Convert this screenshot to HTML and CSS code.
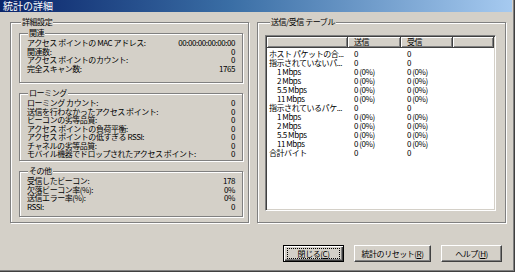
FILE: index.html
```html
<!DOCTYPE html>
<html lang="ja">
  <head>
    <meta charset="UTF-8" />
    <title>統計の詳細</title>
    <link rel="stylesheet" href="styles.css">
  </head>
  <body>
    <div class="window">
      <div class="titlebar">統計の詳細</div>

      <div class="panels">
        <fieldset class="group outer">
          <legend>詳細設定</legend>

          <fieldset class="group sub assoc">
            <legend>関連</legend>
            <div class="row"><span>アクセス ポイントの MAC アドレス:</span><span>00:00:00:00:00:00</span></div>
            <div class="row"><span>関連数:</span><span>0</span></div>
            <div class="row"><span>アクセス ポイントのカウント:</span><span>0</span></div>
            <div class="row"><span>完全スキャン数:</span><span>1765</span></div>
          </fieldset>

          <fieldset class="group sub roaming">
            <legend>ローミング</legend>
            <div class="row"><span>ローミング カウント:</span><span>0</span></div>
            <div class="row"><span>送信を行わなかったアクセス ポイント:</span><span>0</span></div>
            <div class="row"><span>ビーコンの劣等品質:</span><span>0</span></div>
            <div class="row"><span>アクセス ポイントの負荷平衡:</span><span>0</span></div>
            <div class="row"><span>アクセス ポイントの低すぎる RSSI:</span><span>0</span></div>
            <div class="row"><span>チャネルの劣等品質:</span><span>0</span></div>
            <div class="row"><span>モバイル機器でドロップされたアクセス ポイント:</span><span>0</span></div>
          </fieldset>

          <fieldset class="group sub other">
            <legend>その他</legend>
            <div class="row"><span>受信したビーコン:</span><span>178</span></div>
            <div class="row"><span>欠落ビーコン率(%):</span><span>0%</span></div>
            <div class="row"><span>送信エラー率(%):</span><span>0%</span></div>
            <div class="row"><span>RSSI:</span><span>0</span></div>
          </fieldset>
        </fieldset>

        <fieldset class="group table-group">
          <legend>送信/受信 テーブル</legend>
          <div class="listview">
            <div class="lv-head">
              <span></span>
              <span>送信</span>
              <span>受信</span>
              <span></span>
            </div>
            <div class="lv-row"><span>ホスト パケットの合...</span><span>0</span><span>0</span></div>
            <div class="lv-row"><span>指示されていないパ...</span><span>0</span><span>0</span></div>
            <div class="lv-row"><span class="indent">1 Mbps</span><span>0 (0%)</span><span>0 (0%)</span></div>
            <div class="lv-row"><span class="indent">2 Mbps</span><span>0 (0%)</span><span>0 (0%)</span></div>
            <div class="lv-row"><span class="indent">5.5 Mbps</span><span>0 (0%)</span><span>0 (0%)</span></div>
            <div class="lv-row"><span class="indent">11 Mbps</span><span>0 (0%)</span><span>0 (0%)</span></div>
            <div class="lv-row"><span>指示されているパケ...</span><span>0</span><span>0</span></div>
            <div class="lv-row"><span class="indent">1 Mbps</span><span>0 (0%)</span><span>0 (0%)</span></div>
            <div class="lv-row"><span class="indent">2 Mbps</span><span>0 (0%)</span><span>0 (0%)</span></div>
            <div class="lv-row"><span class="indent">5.5 Mbps</span><span>0 (0%)</span><span>0 (0%)</span></div>
            <div class="lv-row"><span class="indent">11 Mbps</span><span>0 (0%)</span><span>0 (0%)</span></div>
            <div class="lv-row"><span>合計バイト</span><span>0</span><span>0</span></div>
          </div>
        </fieldset>
      </div>

      <div class="buttons">
        <button class="btn btn-default" type="button"><span class="focus">閉じる(<u>C</u>)</span></button>
        <button class="btn btn-reset" type="button">統計のリセット(<u>R</u>)</button>
        <button class="btn" type="button">ヘルプ(<u>H</u>)</button>
      </div>
    </div>
  </body>
</html>
```

FILE: styles.css
```css
* {
  margin: 0;
  padding: 0;
  box-sizing: border-box;
}

body {
  background-color: #d4d0c8;
  font-family: "Noto Sans CJK JP", "Liberation Sans", sans-serif;
  font-size: 8px;
  letter-spacing: -0.45px;
  color: #000;
}

.window {
  width: 515px;
  height: 272px;
  background-color: #d4d0c8;
  border-right: 1px solid #404040;
  border-bottom: 1px solid #404040;
  box-shadow: inset -1px -1px 0 #808080;
}

.titlebar {
  height: 12px;
  margin-right: 2px;
  padding-left: 3px;
  background: linear-gradient(90deg, #0a246a 0%, #3a6ea5 45%, #a6caf0 100%);
  color: #fff;
  font-size: 10px;
  line-height: 12px;
  letter-spacing: 0;
}

.panels {
  display: flex;
  gap: 8px;
  padding: 5px 0 0 10px;
}

/* etched group box */
.group {
  border: 1px solid #808080;
  box-shadow: inset 1px 1px 0 #fff, 1px 1px 0 #fff;
  min-inline-size: 0;
}

.group > legend {
  background-color: #d4d0c8;
  line-height: 10px;
  padding: 0 1px;
  margin-left: 2px;
}

.outer {
  width: 239px;
  height: 206px;
  padding: 1px 5px 0 8px;
}

.sub {
  padding: 1px 7px 0 7px;
  margin-bottom: 5px;
}

.sub > legend {
  margin-left: 1px;
}

.assoc {
  height: 55px;
}

.roaming {
  height: 73px;
}

.other {
  height: 51px;
}

.row {
  display: flex;
  justify-content: space-between;
  line-height: 8.5px;
  white-space: nowrap;
}

.table-group {
  width: 249px;
  height: 206px;
  padding: 8px 9px 0 7px;
}

.table-group > legend {
  margin-left: 5px;
}

.listview {
  height: 176px;
  background-color: #fff;
  border: 1px solid;
  border-color: #808080 #fff #fff #808080;
  box-shadow: inset 1px 1px 0 #404040, inset -1px -1px 0 #d4d0c8;
  padding: 1px;
}

.lv-head,
.lv-row {
  display: grid;
  grid-template-columns: 81px 53px 52px 1fr;
  white-space: nowrap;
}

.lv-head {
  height: 11px;
  margin-bottom: 0.5px;
}

.lv-head > span {
  background-color: #d4d0c8;
  border-right: 1px solid #404040;
  border-bottom: 1px solid #404040;
  box-shadow: inset 1px 1px 0 #fff, inset -1px -1px 0 #808080;
  line-height: 10px;
  padding-left: 6px;
}

.lv-row {
  line-height: 9px;
}

.lv-row > span {
  padding-left: 6px;
}

.lv-row > span:first-child {
  padding-left: 2px;
}

.lv-row > span.indent {
  padding-left: 10px;
}

.buttons {
  display: flex;
  justify-content: flex-end;
  gap: 10px;
  padding: 22px 12px 0 0;
}

.btn {
  width: 61px;
  height: 17px;
  font: inherit;
  letter-spacing: inherit;
  color: #000;
  background-color: #d4d0c8;
  border: 1px solid;
  border-color: #fff #404040 #404040 #fff;
  box-shadow: inset -1px -1px 0 #808080;
  line-height: 13px;
}

.btn-reset {
  width: 77px;
}

.btn-default {
  border-color: #000;
  box-shadow: inset 1px 1px 0 #fff, inset -1px -1px 0 #404040, inset -2px -2px 0 #808080;
}

.focus {
  display: block;
  margin: 2px 3px;
  border: 1px dotted #000;
  line-height: 9px;
}
```
